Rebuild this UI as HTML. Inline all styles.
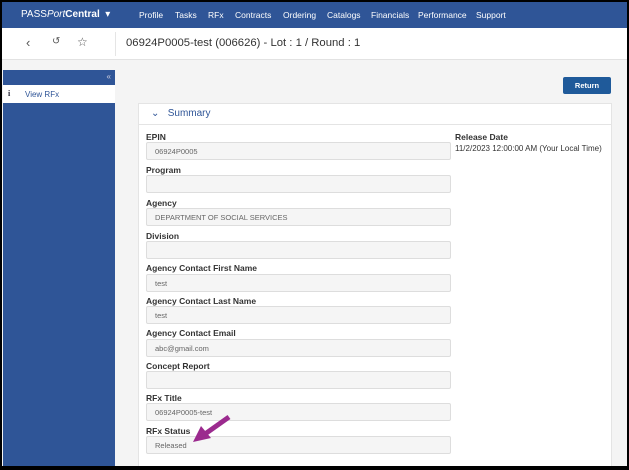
<!DOCTYPE html><html><head><style>
*{margin:0;padding:0;box-sizing:border-box}
body{width:629px;height:470px;background:#000;font-family:"Liberation Sans",sans-serif;position:relative;overflow:hidden}
#f{position:absolute;left:2px;top:2px;width:625px;height:464px;background:#f4f4f4;overflow:hidden}
.nav{position:absolute;left:0;top:0;width:625px;height:26px;background:#2f5597;color:#fff;font-size:8.5px}
.nav span{position:absolute;top:8px}
.hdr{position:absolute;left:0;top:26px;width:625px;height:32px;background:#fff;border-bottom:1px solid #e2e2e2}
.side{position:absolute;left:1px;top:68px;width:112px;height:400px;background:#2f5597}
.vr{position:absolute;left:1px;top:83px;width:112px;height:18px;background:#fff;font-size:8px;color:#2f5597}
.panel{position:absolute;left:136px;top:101px;width:474px;height:370px;background:#fff;border:1px solid #e4e4e4}
.lab{position:absolute;left:144px;font-size:8.5px;font-weight:bold;color:#333}
.in{position:absolute;left:144px;width:305px;height:18px;background:#f5f5f5;border:1px solid #ddd;border-radius:2px;font-size:7.5px;color:#666;padding:4px 0 0 8px}
</style></head><body><div id="f">
<div class="nav"><span style="left:19px;font-size:10px;top:7px">PASS<i>Port</i><b>Central</b> &nbsp;▾</span>
<span style="left:137px">Profile</span><span style="left:173px">Tasks</span><span style="left:206px">RFx</span><span style="left:233px">Contracts</span><span style="left:281px">Ordering</span><span style="left:325px">Catalogs</span><span style="left:369px">Financials</span><span style="left:416px">Performance</span><span style="left:474px">Support</span></div>
<div class="hdr"><span style="position:absolute;left:24px;top:7px;font-size:13px;color:#555">‹</span><span style="position:absolute;left:50px;top:8px;font-size:10px;color:#555">↺</span><span style="position:absolute;left:75px;top:7px;font-size:12px;color:#555">☆</span>
<div style="position:absolute;left:113px;top:4px;width:1px;height:24px;background:#e5e5e5"></div>
<span style="position:absolute;left:124px;top:9px;font-size:11.3px;color:#333">06924P0005-test (006626) - Lot : 1 / Round : 1</span></div>
<div class="side"><span style="position:absolute;right:4px;top:2px;color:#ccd;font-size:8px">«</span></div>
<div class="vr"><b style="position:absolute;left:5px;top:4px;color:#223;font-family:'Liberation Serif'">i</b><span style="position:absolute;left:22px;top:5px">View RFx</span></div>
<div style="position:absolute;left:561px;top:75px;width:48px;height:17px;background:#1f5a9a;border-radius:2px;color:#fff;font-size:7.5px;font-weight:bold;text-align:center;line-height:17px">Return</div>
<div class="panel"><div style="height:21px;border-bottom:1px solid #e4e4e4;color:#2f5597;font-size:10px;padding:4px 0 0 12px">⌄ &nbsp; Summary</div></div>
<div class="lab" style="left:453px;top:130px">Release Date</div>
<div style="position:absolute;left:453px;top:142px;font-size:8px;color:#333">11/2/2023 12:00:00 AM (Your Local Time)</div>
<div class="lab" style="top:130px">EPIN</div><div class="in" style="top:140px">06924P0005</div>
<div class="lab" style="top:163px">Program</div><div class="in" style="top:173px"></div>
<div class="lab" style="top:196px">Agency</div><div class="in" style="top:206px">DEPARTMENT OF SOCIAL SERVICES</div>
<div class="lab" style="top:229px">Division</div><div class="in" style="top:239px"></div>
<div class="lab" style="top:261px">Agency Contact First Name</div><div class="in" style="top:272px">test</div>
<div class="lab" style="top:294px">Agency Contact Last Name</div><div class="in" style="top:304px">test</div>
<div class="lab" style="top:326px">Agency Contact Email</div><div class="in" style="top:337px">abc@gmail.com</div>
<div class="lab" style="top:359px">Concept Report</div><div class="in" style="top:369px"></div>
<div class="lab" style="top:391px">RFx Title</div><div class="in" style="top:401px">06924P0005-test</div>
<div class="lab" style="top:424px">RFx Status</div><div class="in" style="top:434px">Released</div>
<svg style="position:absolute;left:0;top:0" width="625" height="464"><line x1="227" y1="415" x2="203" y2="432" stroke="#9b2a8e" stroke-width="5"/><polygon points="191,440 199,424 209,436" fill="#9b2a8e"/></svg>
</div></body></html>
